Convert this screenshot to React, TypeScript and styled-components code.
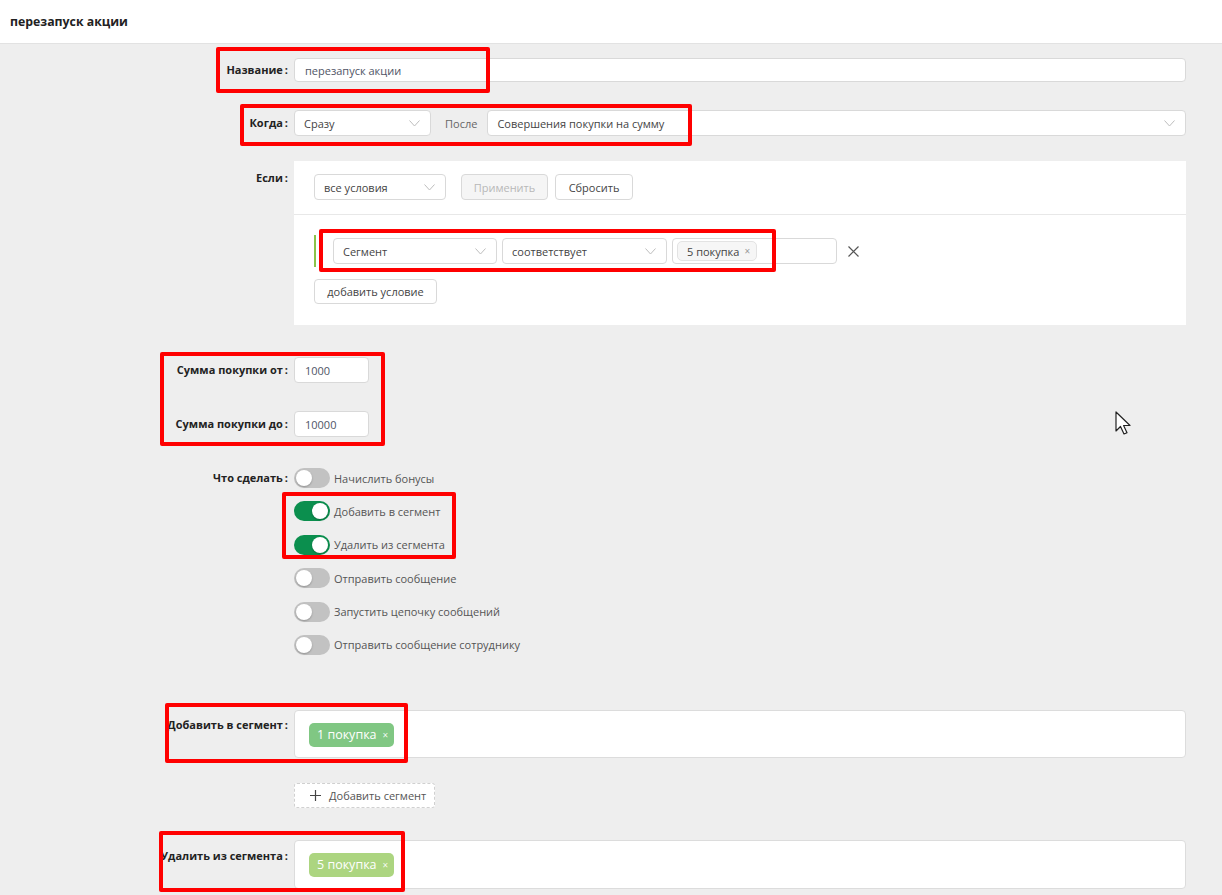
import React from "react";
import styled, { createGlobalStyle } from "styled-components";

const GlobalStyle = createGlobalStyle`
  html, body {
    margin: 0;
    padding: 0;
  }
  body {
    font-family: "Open Sans", "Noto Sans", Arial, sans-serif;
    font-size: 11px;
    color: #555;
    background: #eeeeee;
  }
  * {
    box-sizing: border-box;
  }
`;

const Page = styled.div`
  position: relative;
  width: 1222px;
  min-height: 895px;
  overflow: hidden;
  background: #eeeeee;
`;

const Header = styled.header`
  height: 44px;
  display: flex;
  align-items: center;
  padding-left: 10px;
  background: #fff;
  border-bottom: 1px solid #e2e2e2;
  font-size: 12.3px;
  font-weight: 700;
  color: #222;
`;

const Form = styled.div`
  padding-right: 36px;
`;

const Row = styled.div<{ $mt: number }>`
  display: grid;
  grid-template-columns: 288px 1fr;
  column-gap: 6px;
  margin-top: ${(p) => p.$mt}px;
`;

const Label = styled.div<{ $lh: number }>`
  text-align: right;
  font-weight: 700;
  font-size: 11px;
  color: #222;
  line-height: ${(p) => p.$lh}px;
  white-space: nowrap;
  &::after {
    content: ":";
    margin-left: 2px;
  }
`;

const Blank = styled.div``;

const TextInput = styled.input<{ $w?: number; $h: number }>`
  display: block;
  width: ${(p) => (p.$w ? `${p.$w}px` : "100%")};
  height: ${(p) => p.$h}px;
  padding: 0 10px;
  border: 1px solid #d9d9d9;
  border-radius: 4px;
  background: #fff;
  font: inherit;
  font-size: 11px;
  color: #4f5566;
  outline: none;
`;

const Line = styled.div`
  display: flex;
  align-items: center;
`;

const SelectBox = styled.div<{ $w?: number }>`
  display: flex;
  align-items: center;
  justify-content: space-between;
  flex: ${(p) => (p.$w ? "none" : "1")};
  width: ${(p) => (p.$w ? `${p.$w}px` : "auto")};
  height: 26px;
  padding: 0 10px 0 9px;
  border: 1px solid #d9d9d9;
  border-radius: 4px;
  background: #fff;
  color: #444;
  white-space: nowrap;
`;

const AfterText = styled.span`
  margin: 0 10px 0 14px;
  color: #666;
`;

const Panel = styled.div`
  background: #fff;
`;

const PanelTop = styled.div`
  display: flex;
  align-items: center;
  padding: 13px 20px 14px;
  border-bottom: 1px solid #e8e8e8;
`;

const PanelBody = styled.div`
  padding: 20px 20px 21px;
`;

const Button = styled.div<{ $w: number; $disabled?: boolean; $ml?: number }>`
  display: flex;
  align-items: center;
  justify-content: center;
  width: ${(p) => p.$w}px;
  height: 26px;
  margin-left: ${(p) => p.$ml ?? 0}px;
  border: 1px solid #d9d9d9;
  border-radius: 4px;
  background: ${(p) => (p.$disabled ? "#f5f5f5" : "#fff")};
  color: ${(p) => (p.$disabled ? "#b8b8b8" : "#444")};
  white-space: nowrap;
`;

const ConditionRow = styled.div`
  display: flex;
  align-items: center;
  height: 32px;
`;

const CondBar = styled.div`
  width: 2px;
  height: 32px;
  margin-right: 17px;
  background: #8bc34a;
`;

const CondFields = styled.div`
  display: grid;
  grid-template-columns: 164px 165px 165px;
  column-gap: 5px;
`;

const TagInput = styled.div`
  display: flex;
  align-items: center;
  height: 26px;
  padding: 0 4px;
  border: 1px solid #d9d9d9;
  border-radius: 4px;
  background: #fff;
`;

const GreyTag = styled.span`
  display: inline-flex;
  align-items: center;
  gap: 5px;
  height: 20px;
  padding: 0 6px 0 9px;
  border: 1px solid #e3e3e3;
  border-radius: 5px;
  background: #f6f6f6;
  color: #444;
`;

const TagX = styled.span<{ $light?: boolean }>`
  font-size: 10px;
  color: ${(p) => (p.$light ? "rgba(255,255,255,0.9)" : "#999")};
`;

const RemoveCross = styled.div`
  display: flex;
  margin-left: 11px;
`;

const AddButton = styled(Button)`
  height: 25px;
  margin-top: 12px;
`;

const ToggleList = styled.div`
  display: flex;
  flex-direction: column;
  gap: 13.4px;
`;

const ToggleItem = styled.div`
  display: flex;
  align-items: center;
  gap: 4px;
  height: 20px;
  color: #555;
  white-space: nowrap;
`;

const Toggle = styled.span<{ $on?: boolean }>`
  position: relative;
  flex: none;
  width: 36px;
  height: 20px;
  border-radius: 10px;
  background: ${(p) => (p.$on ? "#0b8f4e" : "#c2c2c2")};
  &::after {
    content: "";
    position: absolute;
    top: 2px;
    left: ${(p) => (p.$on ? "18px" : "2px")};
    width: 16px;
    height: 16px;
    border-radius: 50%;
    background: #fff;
    box-shadow: 0 1px 2px rgba(0, 0, 0, 0.25);
  }
`;

const SegmentBox = styled.div<{ $h: number }>`
  display: flex;
  align-items: flex-start;
  height: ${(p) => p.$h}px;
  padding: 12px 14px;
  border: 1px solid #dcdcdc;
  border-radius: 4px;
  background: #fff;
`;

const ColorTag = styled.span<{ $bg: string }>`
  display: inline-flex;
  align-items: center;
  gap: 6px;
  height: 24px;
  padding: 0 6px 0 8px;
  border-radius: 5px;
  background: ${(p) => p.$bg};
  color: #fff;
  font-size: 12.5px;
`;

const DashedButton = styled.div`
  display: flex;
  align-items: center;
  gap: 8px;
  width: 141px;
  height: 25px;
  padding-left: 15px;
  border: 1px dashed #d0d0d0;
  border-radius: 3px;
  background: #fff;
  color: #555;
  white-space: nowrap;
`;

const Mark = styled.div<{ $x: number; $y: number; $w: number; $h: number }>`
  position: absolute;
  left: ${(p) => p.$x}px;
  top: ${(p) => p.$y}px;
  width: ${(p) => p.$w}px;
  height: ${(p) => p.$h}px;
  border: 4px solid #ff0000;
  border-radius: 2px;
  pointer-events: none;
`;

const Cursor = styled.svg`
  position: absolute;
  left: 1115px;
  top: 411px;
`;

const Chevron = () => (
  <svg width="11" height="7" viewBox="0 0 11 7">
    <path d="M0.5 0.5 L5.5 6 L10.5 0.5" fill="none" stroke="#bdbdbd" strokeWidth="1" />
  </svg>
);

const Select = ({ value, w }: { value: string; w?: number }) => (
  <SelectBox $w={w}>
    <span>{value}</span>
    <Chevron />
  </SelectBox>
);

// red annotation frames drawn over the form
const marks = [
  { x: 216, y: 47, w: 274, h: 46 },
  { x: 240, y: 104, w: 452, h: 42 },
  { x: 319, y: 229, w: 457, h: 43 },
  { x: 160, y: 352, w: 225, h: 94 },
  { x: 282, y: 492, w: 174, h: 67 },
  { x: 165, y: 703, w: 243, h: 60 },
  { x: 159, y: 831, w: 246, h: 61 },
];

const actions = [
  { text: "Начислить бонусы", on: false },
  { text: "Добавить в сегмент", on: true },
  { text: "Удалить из сегмента", on: true },
  { text: "Отправить сообщение", on: false },
  { text: "Запустить цепочку сообщений", on: false },
  { text: "Отправить сообщение сотруднику", on: false },
];

export default function App() {
  return (
    <Page>
      <GlobalStyle />
      <Header>перезапуск акции</Header>

      <Form>
        <Row $mt={14}>
          <Label $lh={24}>Название</Label>
          <TextInput $h={24} readOnly value="перезапуск акции" />
        </Row>

        <Row $mt={28}>
          <Label $lh={26}>Когда</Label>
          <Line>
            <Select value="Сразу" w={137} />
            <AfterText>После</AfterText>
            <Select value="Совершения покупки на сумму" />
          </Line>
        </Row>

        <Row $mt={25}>
          <Label $lh={34}>Если</Label>
          <Panel>
            <PanelTop>
              <Select value="все условия" w={132} />
              <Button $w={87} $disabled $ml={15}>
                Применить
              </Button>
              <Button $w={78} $ml={7}>
                Сбросить
              </Button>
            </PanelTop>
            <PanelBody>
              <ConditionRow>
                <CondBar />
                <CondFields>
                  <Select value="Сегмент" />
                  <Select value="соответствует" />
                  <TagInput>
                    <GreyTag>
                      5 покупка <TagX>×</TagX>
                    </GreyTag>
                  </TagInput>
                </CondFields>
                <RemoveCross>
                  <svg width="11" height="11" viewBox="0 0 11 11">
                    <path d="M0.5 0.5 L10.5 10.5 M10.5 0.5 L0.5 10.5" stroke="#555" strokeWidth="1.2" />
                  </svg>
                </RemoveCross>
              </ConditionRow>
              <AddButton $w={123}>добавить условие</AddButton>
            </PanelBody>
          </Panel>
        </Row>

        <Row $mt={32}>
          <Label $lh={26}>Сумма покупки от</Label>
          <TextInput $w={75} $h={26} readOnly value="1000" />
        </Row>

        <Row $mt={28}>
          <Label $lh={26}>Сумма покупки до</Label>
          <TextInput $w={75} $h={26} readOnly value="10000" />
        </Row>

        <Row $mt={31}>
          <Label $lh={20}>Что сделать</Label>
          <ToggleList>
            {actions.map((a) => (
              <ToggleItem key={a.text}>
                <Toggle $on={a.on} />
                {a.text}
              </ToggleItem>
            ))}
          </ToggleList>
        </Row>

        <Row $mt={55}>
          <Label $lh={30}>Добавить в сегмент</Label>
          <SegmentBox $h={48}>
            <ColorTag $bg="#80c783">
              1 покупка <TagX $light>×</TagX>
            </ColorTag>
          </SegmentBox>
        </Row>

        <Row $mt={25}>
          <Blank />
          <DashedButton>
            <svg width="11" height="11" viewBox="0 0 11 11">
              <path d="M5.5 0 V11 M0 5.5 H11" stroke="#444" strokeWidth="1.2" />
            </svg>
            Добавить сегмент
          </DashedButton>
        </Row>

        <Row $mt={32}>
          <Label $lh={32}>Удалить из сегмента</Label>
          <SegmentBox $h={49}>
            <ColorTag $bg="#acd580">
              5 покупка <TagX $light>×</TagX>
            </ColorTag>
          </SegmentBox>
        </Row>
      </Form>

      {marks.map((m, i) => (
        <Mark key={i} $x={m.x} $y={m.y} $w={m.w} $h={m.h} />
      ))}

      <Cursor width="17" height="25" viewBox="0 0 17 25">
        <path
          d="M1 1 L1 20 L5.5 15.5 L9 23 L12 21.7 L8.6 14.5 L15 14.5 Z"
          fill="#fff"
          stroke="#222"
          strokeWidth="1.2"
          strokeLinejoin="round"
        />
      </Cursor>
    </Page>
  );
}
